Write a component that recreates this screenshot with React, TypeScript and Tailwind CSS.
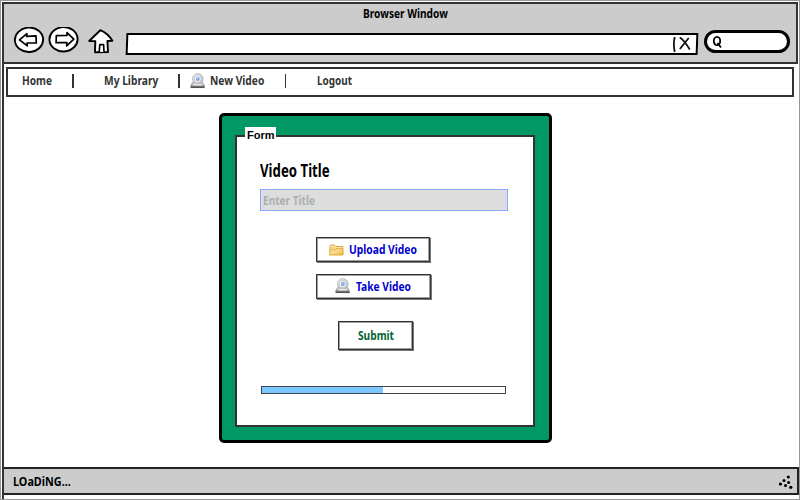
import { useLayoutEffect, useRef, useState } from "react";

/** Text condensed horizontally to a fixed measure. */
function Fit({ w, className = "", children }: { w: number; className?: string; children: string }) {
  const ref = useRef<HTMLSpanElement>(null);
  const [scale, setScale] = useState(1);
  useLayoutEffect(() => {
    if (ref.current) setScale(w / ref.current.offsetWidth);
  }, [w]);
  return (
    <span className={`block shrink-0 ${className}`} style={{ width: w }}>
      <span ref={ref} className="inline-block origin-left whitespace-nowrap" style={{ transform: `scaleX(${scale})` }}>
        {children}
      </span>
    </span>
  );
}

function Webcam({ className = "" }: { className?: string }) {
  return (
    <svg viewBox="0 0 15 16" className={`h-4 w-[15px] shrink-0 ${className}`}>
      <defs>
        <linearGradient id="cam" x1="0" y1="0" x2="1" y2="1">
          <stop offset="0" stopColor="#f8f8f8" />
          <stop offset="1" stopColor="#bbb" />
        </linearGradient>
        <linearGradient id="base" x1="0" y1="0" x2="0" y2="1">
          <stop offset="0" stopColor="#eee" />
          <stop offset="1" stopColor="#777" />
        </linearGradient>
      </defs>
      <path d="M2.5 9.5 L12.5 9.5 L14.5 13 V14.6 H.7 V13 Z" fill="url(#base)" stroke="#777" strokeWidth=".6" />
      <path d="M1 14.2H14.3" stroke="#333" strokeWidth="1" />
      <circle cx="7.8" cy="5.9" r="5.3" fill="url(#cam)" stroke="#aaa" strokeWidth=".8" />
      <circle cx="7.8" cy="6" r="3.5" fill="#f0f4fb" stroke="#b5b9c2" strokeWidth=".7" />
      <circle cx="7.8" cy="6" r="2" fill="#7da6df" />
      <circle cx="7.2" cy="5.4" r=".7" fill="#c8dcf8" />
      <path d="M4 11.8H11.5" stroke="#fff" strokeWidth="1" />
    </svg>
  );
}

function Folder() {
  return (
    <svg viewBox="0 0 15 12" className="h-3 w-[15px] shrink-0">
      <defs>
        <linearGradient id="fold" x1="0" y1="0" x2="1" y2="1">
          <stop offset="0" stopColor="#fff8d0" />
          <stop offset="1" stopColor="#f2b43a" />
        </linearGradient>
      </defs>
      <path d="M1 10.5V2Q1 1 2 1H5.5L7 2.5H13.7V10.5Z" fill="#fbe8a0" stroke="#dba53d" />
      <path d="M2.5 4H6" stroke="#e0b050" strokeWidth=".8" />
      <path d="M.8 11V6H6L7.2 4.7H14V11Z" fill="url(#fold)" stroke="#e0a536" strokeWidth=".9" />
    </svg>
  );
}

function NavIcons() {
  return (
    <svg viewBox="0 0 106 28" className="h-7 w-[106px] shrink-0" fill="#fff" stroke="#000" strokeWidth="1.9" strokeLinejoin="round">
      <ellipse cx="18" cy="12.8" rx="14.1" ry="12.2" transform="rotate(-4 18 12.8)" />
      <path d="M8.5 12.8 L15.9 6.6 L15.7 9.3 L25 8.9 L25.3 16 L16 16 L16.3 18.9 Z" strokeWidth="1.7" />
      <ellipse cx="52.5" cy="12.3" rx="14.1" ry="12.2" transform="rotate(-4 52.5 12.3)" />
      <path d="M62.8 12.1 L56 5.7 L56 8.5 L45.3 8.7 L45.1 15.7 L55.9 15.5 L55.7 18.8 Z" strokeWidth="1.7" />
      <path d="M78.2 14 L89.3 3.2 Q97 6.5 101.4 13.8 L96.4 14 L97 25 L84 25.2 L84.3 14.1 Z" />
      <path d="M88.2 25 L88.8 17.7 L92.6 17.5 L93 24.8" strokeWidth="1.7" />
    </svg>
  );
}

function Divider() {
  return <i className="h-[14px] w-[1.5px] shrink-0 bg-[#333]" />;
}

function SketchButton({ className, children }: { className: string; children: React.ReactNode }) {
  return (
    <button className={`flex items-center border border-[#333] bg-white pb-[2px] text-[13px] leading-4 shadow-[1px_1px_0_#777,inset_0_0_0_1px_#3337] ${className}`}>
      {children}
    </button>
  );
}

export default function App() {
  return (
    <div className="flex h-[500px] w-[800px] flex-col overflow-hidden border border-[#999] bg-white pl-px pt-px font-['Noto_Sans','Open_Sans',sans-serif] font-bold text-black">
      <header className="flex h-[62px] w-[796px] shrink-0 flex-col border-2 border-[#333] bg-[#ccc]">
        <div className="flex h-[22px] justify-center pl-[11px] text-[13px] leading-[18px]">
          <Fit w={85}>Browser Window</Fit>
        </div>
        <div className="flex items-start pl-[7px]">
          <div className="mt-[1px]"><NavIcons /></div>
          <div className="ml-[9px] mt-[7px] flex h-[22px] w-[572px] shrink-0 -skew-x-[2deg] items-center justify-end border-2 border-black bg-white">
            <svg viewBox="0 0 26 18" className="h-[18px] w-[26px]" fill="none" stroke="#111" strokeWidth="1.8">
              <path d="M4.5 2Q3 9 5 17M9.5 2.5Q13.5 4.5 20 14.5M18.5 3L10 14" />
            </svg>
          </div>
          <div className="ml-[6px] mt-[4px] flex h-[23px] w-[86px] shrink-0 items-center rounded-full border-[3px] border-black bg-white pl-[5px]">
            <svg viewBox="0 0 12 14" className="h-[14px] w-3" fill="none" stroke="#000" strokeWidth="1.8">
              <ellipse cx="5" cy="6" rx="3.2" ry="4.2" />
              <path d="M5.5 8L9 12.5" />
            </svg>
          </div>
        </div>
      </header>

      <div className="flex min-h-0 w-[796px] flex-1 flex-col border-l-2 border-[#333]">
        <nav className="ml-[2px] mt-[3px] flex h-[30px] w-[788px] shrink-0 items-center border-2 border-[#333] pl-[14px] pb-[2px] text-[12.5px] leading-4 text-[#333]">
          <Fit w={30}>Home</Fit>
          <div className="ml-[20px] flex"><Divider /></div>
          <Fit w={54} className="ml-[30.5px]">My Library</Fit>
          <div className="ml-[20px] flex"><Divider /></div>
          <Webcam className="ml-[10px]" />
          <Fit w={54} className="ml-[5.5px]">New Video</Fit>
          <div className="ml-[20.5px] flex"><Divider /></div>
          <Fit w={35} className="ml-[31px]">Logout</Fit>
        </nav>

        <main className="min-h-0 flex-1">
          <section className="ml-[215px] mt-[16px] h-[330px] w-[333px] rounded-[5px] border-[3px] border-black bg-[#009966] pl-[13px] pt-[19px]">
            <div className="relative flex h-[292px] w-[300px] flex-col border-2 border-[#333] bg-white pl-[23px]">
              <span className="absolute -top-[10px] left-[8px] h-[14px] w-[31px] bg-white pl-[2px] font-['Liberation_Sans',sans-serif] text-[11px] leading-[16px]">
                Form
              </span>
              <h1 className="mt-[22px] h-6 text-[17px] leading-6">
                <Fit w={70}>Video Title</Fit>
              </h1>
              <div className="mt-[6px] flex h-[22px] w-[248px] items-center border border-[#8af] bg-[#ddd] pl-[2px] text-[13px] leading-4 text-[#aab0ae]">
                <Fit w={52}>Enter Title</Fit>
              </div>
              <SketchButton className="ml-[56px] mt-[26px] h-[25px] w-[114px] pl-[12px] text-[#0000cc]">
                <div className="pt-[2px]"><Folder /></div>
                <Fit w={68} className="ml-[5px]">Upload Video</Fit>
              </SketchButton>
              <SketchButton className="ml-[56px] mt-[12px] h-[25px] w-[115px] pl-[18px] text-[#0000cc]">
                <div className="pt-px"><Webcam /></div>
                <Fit w={55} className="ml-[6px]">Take Video</Fit>
              </SketchButton>
              <SketchButton className="ml-[78px] mt-[22px] h-[29px] w-[75px] pl-[19px] text-[#006633]">
                <Fit w={36}>Submit</Fit>
              </SketchButton>
              <div className="ml-px mt-[36px] h-[8px] w-[245px] border border-[#444] bg-white">
                <div className="h-full w-[121px] bg-[#7ac8ff]" />
              </div>
            </div>
          </section>
        </main>

        <footer className="mb-[4px] flex h-[28px] w-[795px] shrink-0 items-center justify-between border-2 border-l-0 border-[#222] bg-[#ccc] pl-[9px] pr-[4px] pt-[2px] font-['Noto_Sans',sans-serif] text-[12.5px] leading-4">
          <Fit w={58}>LOaDiNG...</Fit>
          <svg viewBox="0 0 14 14" className="h-[14px] w-[14px]">
            <circle cx="9.3" cy="2" r="1.6" />
            <circle cx="5" cy="5.5" r="1.5" />
            <circle cx="1.5" cy="9" r="1.6" />
            <circle cx="9.6" cy="7.5" r="1.5" />
            <circle cx="6.5" cy="10.5" r="1.5" />
            <circle cx="11.8" cy="12.3" r="1.6" />
          </svg>
        </footer>
      </div>
    </div>
  );
}
